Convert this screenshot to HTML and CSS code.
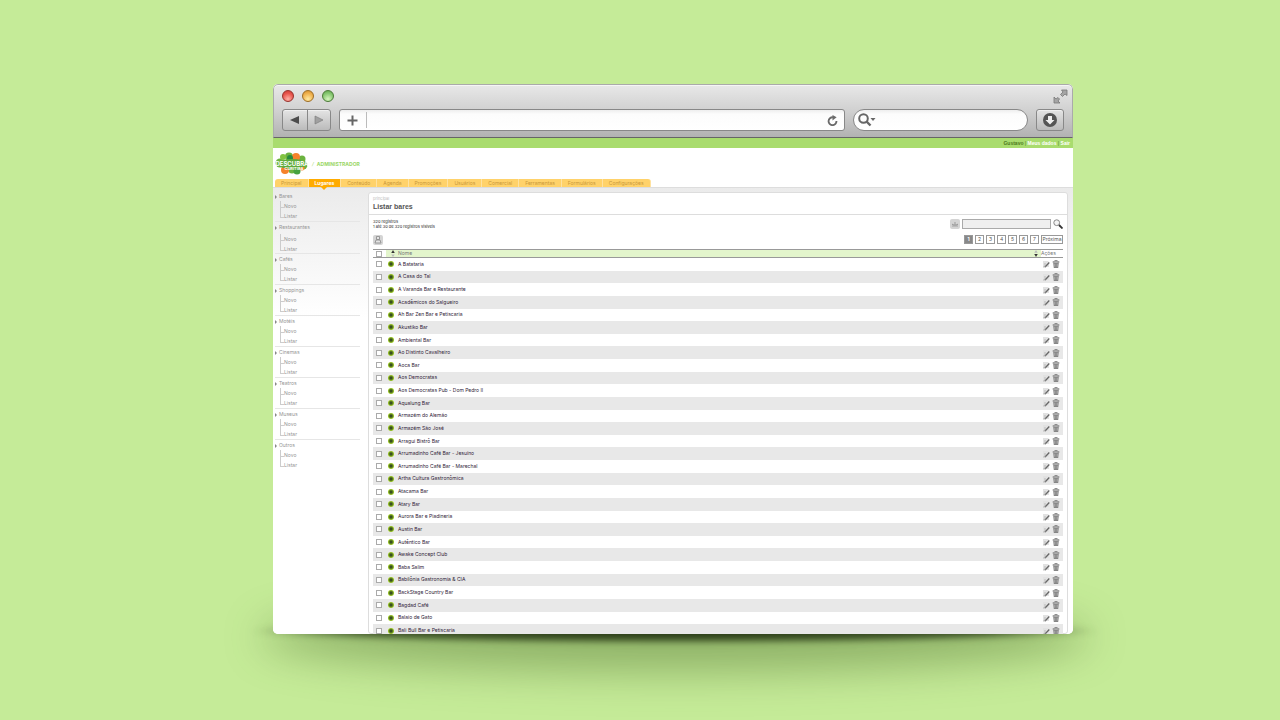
FILE: index.html
```html
<!DOCTYPE html>
<html lang="pt-BR">
<head>
<meta charset="utf-8">
<title>Listar bares</title>
<link rel="stylesheet" href="styles.css">
</head>
<body>
<svg class="sprite" aria-hidden="true">
  <symbol id="i-edit" viewBox="0 0 8 8"><path d="M1 1h5l1 1v5H1z" fill="#e2e2e2"/><path d="M2 4h2M2 6h1" stroke="#bbb"/><path d="M3 7L7.300 2.500" stroke="#666" stroke-width="1.300"/><path d="M1 7h3" stroke="#aaa" stroke-width=".7"/></symbol>
  <symbol id="i-trash" viewBox="0 0 8 8"><path d="M.7 1.200h6.600v1.600H.7zM1.200 3h5.600L6.200 8H1.800z" fill="#858585"/><path d="M2.500 2h3M2.800 3.700v3M5.200 3.700v3" stroke="#ccc" stroke-width=".6"/><path d="M2.500 .7h3" stroke="#777"/></symbol>
</svg>
<div class="scene">
<div class="window">
  <header class="chrome">
    <div class="titlebar">
      <button class="light red" aria-label="Fechar"></button>
      <button class="light amber" aria-label="Minimizar"></button>
      <button class="light green" aria-label="Ampliar"></button>
      <button class="expand" aria-label="Tela cheia"><svg viewBox="0 0 15 15"><path d="M8.500 1H14v5.500l-2-1.500-2.500 2.500-2-2L10 3z" fill="#a5a5a5" stroke="#777" stroke-width=".8"/><path d="M1 8v6h6l-2-2 1.500-2-1.500-1.500L3 10z" fill="#a5a5a5" stroke="#777" stroke-width=".8"/></svg></button>
    </div>
    <div class="toolbar">
      <div class="navbuttons">
        <button aria-label="Voltar"><svg viewBox="0 0 10 10"><path d="M0 5L9 1v8z" fill="#4c4c4c"/></svg></button>
        <button aria-label="Avançar"><svg viewBox="0 0 10 10"><path d="M1 1l8 4-8 4z" fill="#a0a0a0" stroke="#777" stroke-width=".6"/></svg></button>
      </div>
      <div class="address">
        <button aria-label="Adicionar"><svg viewBox="0 0 11 11"><path d="M5.500 .5v10M.5 5.500h10" stroke="#666" stroke-width="2"/></svg></button>
        <input type="text" aria-label="Endereço">
        <button aria-label="Recarregar"><svg viewBox="0 0 12 12"><path d="M10.300 6.500A4.300 4.300 0 1 1 6.500 2.500" fill="none" stroke="#6a6a6a" stroke-width="2"/><path d="M6 0l4.500 2.500L6 6z" fill="#6a6a6a"/></svg></button>
      </div>
      <div class="websearch">
        <svg viewBox="0 0 18 14"><circle cx="5.500" cy="5.500" r="4.300" fill="none" stroke="#666" stroke-width="2"/><path d="M8.500 8.500l4 4" stroke="#666" stroke-width="2.400"/><path d="M12.500 5h5l-2.500 3z" fill="#666"/></svg>
        <input type="text" aria-label="Pesquisar na web">
      </div>
      <button class="download" aria-label="Downloads"><svg viewBox="0 0 14 14"><circle cx="7" cy="7" r="7" fill="#555"/><path d="M5 3h4v4h2.500L7 11.500 2.500 7H5z" fill="#eee"/></svg></button>
    </div>
  </header>
  <div class="userbar"><b>Gustavo</b> | <a href="#">Meus dados</a> | <a href="#">Sair</a></div>
  <div class="brand">
    <svg class="logo" viewBox="0 0 34 24" role="img" aria-label="Descubra Curitiba">
      <g fill="#6cb33f"><circle cx="5" cy="11" r="4.500"/><circle cx="28" cy="13" r="4.500"/><circle cx="14" cy="4.500" r="4"/><circle cx="17" cy="18" r="3.500"/><circle cx="27" cy="7" r="3.500"/></g>
      <g fill="#f5822a"><circle cx="21" cy="5" r="4"/><circle cx="10" cy="18" r="4"/><circle cx="27" cy="16" r="2.500"/></g>
      <circle cx="8" cy="5" r="3" fill="#82c341"/><circle cx="15" cy="6" r="3" fill="#278b3e"/><circle cx="22" cy="19" r="3.500" fill="#47a23f"/>
      <ellipse cx="17" cy="12" rx="14" ry="5" fill="#5fac3c"/>
      <text x="17" y="14" text-anchor="middle" font-size="6" font-weight="700" fill="#fff">DESCUBRA</text>
      <text x="19" y="17.500" text-anchor="middle" font-size="4" font-weight="700" fill="#fff">CURITIBA</text>
    </svg>
    <span class="role"><i>/</i>ADMINISTRADOR</span>
  </div>
  <nav class="tabs">
    <a href="#">Principal</a><a href="#" class="on">Lugares</a><a href="#">Conteúdo</a><a href="#">Agenda</a><a href="#">Promoções</a><a href="#">Usuários</a><a href="#">Comercial</a><a href="#">Ferramentas</a><a href="#">Formulários</a><a href="#">Configurações</a>
  </nav>
  <div class="body">
    <nav class="side" id="side"></nav>
    <main class="panel">
      <div class="heading"><small>principal</small><h1>Listar bares</h1></div>
      <div class="info">
        <p>320 registros<br>1 até 30 de 320 registros visíveis</p>
        <form class="find">
          <button type="button" class="tool" aria-label="Opções"><svg viewBox="0 0 10 10"><path d="M2 5v3h6V5z" fill="#bbb"/><path d="M2 5l1.500 1h3L8 5M5 3v2" stroke="#999" fill="none"/></svg></button>
          <input type="text" aria-label="Buscar">
          <button type="button" class="lens" aria-label="Buscar registros"><svg viewBox="0 0 10 10"><circle cx="3.700" cy="3.700" r="2.900" fill="#f4f4f4" stroke="#888"/><path d="M6 6l3.500 3.500" stroke="#333" stroke-width="1.800"/></svg></button>
        </form>
      </div>
      <div class="actions">
        <button class="tool" aria-label="Imprimir"><svg viewBox="0 0 10 10"><path d="M3.500 1.500h3v3h-3zM2 8l1-3h4l1 3z" fill="#e4e4e4" stroke="#909090" stroke-width=".9"/></svg></button>
        <div class="pages"><button class="on">1</button><button>2</button><button>3</button><button>4</button><button>5</button><button>6</button><button>7</button><button class="next">Próxima</button></div>
      </div>
      <table>
        <thead><tr><th class="c-check"><input type="checkbox" aria-label="Selecionar todos"></th><th class="c-dot"><svg viewBox="0 0 4 8"><path d="M0 3.500L2 0l2 3.500z" fill="#333"/><path d="M0 5h4L2 8z" fill="#bbb"/></svg></th><th>Nome</th><th class="c-sort"><svg viewBox="0 0 4 8"><path d="M0 3L2 0l2 3z" fill="#bbb"/><path d="M0 4.500h4L2 8z" fill="#333"/></svg></th><th class="c-act">Ações</th></tr></thead>
        <tbody id="rows"></tbody>
      </table>
    </main>
  </div>
</div>
</div>
<script src="app.js"></script>
</body>
</html>
```
FILE: styles.css
```css
* { box-sizing: border-box; }
body { margin: 0; background: #c5eb98; font-family: Inter, "Liberation Sans", sans-serif; font-size: 5px; color: #222; }
button, input { font: inherit; margin: 0; padding: 0; border: 0; background: none; color: inherit; }
input:focus { outline: none; }
a { color: inherit; text-decoration: none; }
svg { display: block; }
.sprite { display: none; }
.scene { position: relative; isolation: isolate; height: 100vh; padding: 84px 207px 86px 273px; overflow: hidden; }
.scene::before, .scene::after { content: ""; position: absolute; z-index: -1; }
.scene::before { left: 260px; right: 190px; bottom: 48px; height: 70px; border-radius: 50%; background: rgba(50, 80, 20, .36); filter: blur(20px); }
.scene::after { left: 250px; right: 180px; bottom: 77px; height: 24px; background: radial-gradient(closest-side, rgba(25, 40, 10, .9), rgba(25, 40, 10, .7) 75%, transparent); filter: blur(3px); }
.window { display: flex; flex-direction: column; height: 100%; background: #fff; border-radius: 5px; overflow: hidden; }

.chrome { flex: none; height: 54px; padding: 4px 8px 6px; border: 1px solid #aaa; border-bottom-color: #666; border-radius: 5px 5px 0 0; background: linear-gradient(#e8e8e8, #d0d0d0 50%, #b2b2b2); box-shadow: inset 0 1px #f5f5f5; }
.titlebar { display: flex; gap: 8px; height: 20px; padding-top: 1px; }
.light { width: 12px; height: 12px; border-radius: 50%; border: 1px solid; }
.red { border-color: #96312c; background: radial-gradient(circle at 50% 80%, #ffb0a5, #e8554d 60%, #c93c36); }
.amber { border-color: #9c6c25; background: radial-gradient(circle at 50% 80%, #ffe9a0, #efb04c 60%, #d08c2e); }
.green { border-color: #4b7a38; background: radial-gradient(circle at 50% 80%, #d6f5bd, #86c771 60%, #5ea34b); }
.expand { margin: -1px -4px 0 auto; width: 15px; height: 15px; }
.toolbar { display: flex; }
.navbuttons, .download { display: flex; height: 22px; border: 1px solid #888; border-radius: 3px; background: linear-gradient(#e4e4e4, #bbb); box-shadow: inset 0 1px #f0f0f0; }
.navbuttons button { display: grid; place-items: center; width: 24px; }
.navbuttons button + button { border-left: 1px solid #888; width: 23px; }
.navbuttons svg { width: 10px; height: 10px; }
.address { flex: 1; display: flex; align-items: center; height: 22px; margin: 0 8px; padding: 0 6px 0 7px; border: 1px solid #888; border-radius: 3px; background: linear-gradient(#eee, #fcfcfc 4px, #fff); }
.address svg { width: 11px; height: 11px; }
.address input { flex: 1; height: 16px; margin: 0 8px; border-left: 1px solid #bbb; font-size: 12px; }
.websearch { display: flex; align-items: center; width: 175px; height: 22px; padding: 0 4px; border: 1px solid #888; border-radius: 11px; background: linear-gradient(#eee, #fcfcfc 4px, #fff); }
.websearch svg { width: 18px; height: 14px; }
.websearch input { flex: 1; min-width: 0; font-size: 12px; }
.download { align-items: center; justify-content: center; width: 28px; margin-left: 8px; }
.download svg { width: 14px; height: 14px; }

.userbar { flex: none; height: 10px; padding-right: 3px; background: #a9dc6e; color: #4d7a1d; font-family: "Liberation Sans", sans-serif; line-height: 10px; text-align: right; }
.userbar a { color: #fff; font-weight: 700; }
.brand { flex: none; display: flex; align-items: center; height: 31px; padding-left: 2px; }
.logo { width: 34px; height: 24px; }
.role { margin-left: 3px; color: #9ad665; font-weight: 700; }
.role i { margin-right: 3px; font-weight: 400; }
.tabs { flex: none; display: flex; height: 9px; padding-left: 2px; background: linear-gradient(#fff 8px, #ddd 8px); }
.tabs a { height: 8px; padding: 0 6px; background: #ffd26a; color: #c9983a; line-height: 8px; border-right: 1px solid #ffe2a0; }
.tabs a:first-child { border-top-left-radius: 3px; }
.tabs a:last-child { border-top-right-radius: 3px; }
.tabs .on { position: relative; background: #ffab00; color: #fff; font-weight: 700; }
.tabs .on::after { content: ""; position: absolute; top: 8px; left: 50%; margin-left: -3px; border: 3px solid transparent; border-top-color: #ffab00; border-bottom: 0; }

.body { flex: 1; min-height: 0; display: flex; padding: 3px 5px 0 2px; background: linear-gradient(#ebebeb, #fff 130px); }
.side { flex: none; width: 85px; height: 279px; margin-right: 8px; display: flex; flex-direction: column; color: #959595; }
.side section { flex: 1; min-height: 0; border-bottom: 1px solid #e6e6e6; }
.side section:last-child { border: 0; }
.side h2 { margin: 0; padding-left: 4px; font-size: 5px; font-weight: 400; line-height: 10px; position: relative; }
.side h2::before { content: ""; position: absolute; left: 0; top: 4px; border: 2px solid transparent; border-left-color: #888; border-right: 0; }
.side ul { margin: 0; padding: 0 0 0 5px; list-style: none; }
.side li { position: relative; padding-left: 4px; line-height: 10px; }
.side li::before { content: ""; position: absolute; left: 0; top: 0; width: 3px; height: 6px; border: solid #ccc; border-width: 0 0 1px 1px; }
.side li + li::before { top: -4px; height: 10px; }
.side .roomy { flex: 1 0 2px; }
.side .roomy h2 { padding-bottom: 2px; }

.panel { flex: 1; min-width: 0; margin-top: 1px; border: 1px solid #ddd; border-radius: 3px; background: #fff; padding: 3px 4px 0; }
.heading { margin: 0 -4px; padding: 0 4px; height: 19px; border-bottom: 1px solid #ddd; }
.heading small { display: block; font-size: 4px; line-height: 6px; color: #bbb; }
.heading h1 { margin: 0; font: 700 7px/10px "Liberation Sans", sans-serif; color: #555; }
.info { display: flex; justify-content: space-between; padding-top: 4px; height: 20px; }
.info p { margin: 0; font-size: 4px; line-height: 5px; }
.find { display: flex; gap: 2px; height: 10px; }
.find input { width: 89px; border: 1px solid #aaa; background: #efefef; }
.lens { width: 10px; }
.lens svg { width: 10px; height: 10px; }
.tool { width: 10px; height: 10px; border-radius: 2px; background: #d4d4d4; }
.actions { display: flex; justify-content: space-between; height: 14px; }
.pages { display: flex; gap: 2px; }
.pages button { width: 9px; height: 9px; border: 1px solid #999; color: #555; line-height: 7px; text-align: center; }
.pages .on { background: #888; color: #fff; font-weight: 700; }
.pages .next { width: 22px; }
table { width: 100%; height: 388px; border-collapse: collapse; table-layout: fixed; }
th, td { padding: 0; text-align: left; font-weight: 400; line-height: 7px; }
thead tr { height: 9px; background: #e3f5cc; box-shadow: inset 0 1px #999, inset 0 -1px #999; color: #777; }
thead .c-check, thead .c-act { background: #fff; box-shadow: inset 0 1px #999, inset 0 -1px #999; }
.c-check { width: 13px; }
.c-dot { width: 12px; }
.c-dot svg { margin-left: 5px; }
.c-sort { width: 7px; }
.c-act { width: 22px; }
th svg { width: 4px; height: 7px; }
tbody tr:nth-child(even) { background: #e8e8e8; }
input[type=checkbox] { appearance: none; display: block; width: 6px; height: 6px; margin-left: 3px; border: 1px solid #aaa; background: #fff; }
.dot { display: block; width: 6px; height: 6px; margin-left: 2px; border-radius: 50%; background: radial-gradient(circle, #38501e 1px, #a5d426 3px); }
.row-actions { display: flex; gap: 2px; padding-left: 1px; }
.row-actions button, .row-actions svg { width: 8px; height: 8px; }
tbody td { color: #301c38; }
```
FILE: app.js
```js
const bars = ["A Batataria", "A Casa do Tal", "A Varanda Bar e Restaurante", "Acadêmicos do Salgueiro", "Ah Bar Zen Bar e Petiscaria", "Akustiko Bar", "Ambiental Bar", "Ao Distinto Cavalheiro", "Aoca Bar", "Aos Democratas", "Aos Democratas Pub - Dom Pedro II", "Aqualung Bar", "Armazém do Alemão", "Armazém São José", "Arragui Bistrô Bar", "Arrumadinho Café Bar - Jesuíno", "Arrumadinho Café Bar - Marechal", "Artha Cultura Gastronômica", "Atacama Bar", "Atary Bar", "Aurora Bar e Piadineria", "Austin Bar", "Autêntico Bar", "Awake Concept Club", "Baba Salim", "Babilônia Gastronomia & CIA", "BackStage Country Bar", "Bagdad Café", "Balaio de Gato", "Bali Bull Bar e Petiscaria"];
const places = ["Bares", "Restaurantes", "Cafés", "Shoppings", "Motéis", "Cinemas", "Teatros", "Museus", "Outros"];

document.getElementById("rows").innerHTML = bars.map(name => {
  const label = name.replace("&", "&amp;");
  return `<tr><td><input type="checkbox" aria-label="${label}"></td><td><span class="dot"></span></td><td colspan="2">${label}</td><td><div class="row-actions"><button aria-label="Editar"><svg><use href="#i-edit"/></svg></button><button aria-label="Excluir"><svg><use href="#i-trash"/></svg></button></div></td></tr>`;
}).join("");

document.getElementById("side").innerHTML = places.map((place, i) =>
  `<section${i === 1 ? ' class="roomy"' : ""}><h2>${place}</h2><ul><li><a href="#">Novo</a></li><li><a href="#">Listar</a></li></ul></section>`
).join("");
```
